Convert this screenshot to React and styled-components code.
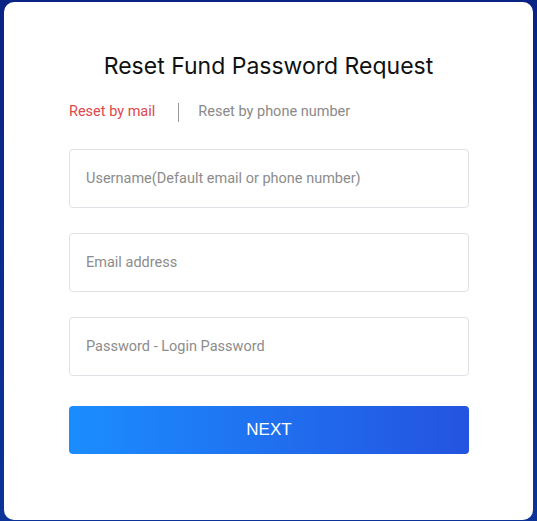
import React from "react";
import styled, { createGlobalStyle } from "styled-components";

const Global = createGlobalStyle`
  html, body { margin: 0; padding: 0; }
  body {
    background: linear-gradient(180deg, #0a2385 0%, #0b3398 100%);
    font-family: Roboto, "Noto Sans", Arial, sans-serif;
    min-height: 521px;
  }
`;

const Page = styled.div`
  padding: 2px 4px 1px 4px;
  box-sizing: border-box;
  height: 521px;
`;

const Card = styled.div`
  background: #fff;
  border-radius: 10px;
  height: 518px;
  box-sizing: border-box;
  padding: 48px 68px 0 65px;
  display: flex;
  flex-direction: column;
`;

const Title = styled.h1`
  margin: 0;
  font-family: Inter, "Noto Sans", sans-serif;
  font-weight: 400;
  font-size: 23px;
  line-height: 32px;
  color: #111;
  text-align: center;
  padding-left: 3px;
`;

const Tabs = styled.div`
  display: flex;
  align-items: center;
  margin-top: 20px;
  height: 20px;
`;

const Tab = styled.span`
  font-size: 14.5px;
  line-height: 20px;
  color: ${(p) => (p.$active ? "#e0474c" : "#8a8a8a")};
`;

const Divider = styled.span`
  width: 1px;
  height: 19px;
  background: #9a9a9a;
  margin: 0 19px 0 23px;
`;

const Form = styled.form`
  display: flex;
  flex-direction: column;
  gap: 25px;
  margin-top: 27px;
`;

const Field = styled.input`
  box-sizing: border-box;
  width: 400px;
  height: 59px;
  border: 1px solid #dfe1e6;
  border-radius: 4px;
  padding: 0 16px;
  font-family: Roboto, "Noto Sans", sans-serif;
  font-size: 14.5px;
  color: #333;
  outline: none;
  &::placeholder { color: #8c8c8c; }
`;

const Button = styled.button`
  margin-top: 5px;
  width: 400px;
  height: 48px;
  border: none;
  border-radius: 4px;
  background: linear-gradient(90deg, #1b8dff 0%, #2453e0 100%);
  color: #fff;
  font-family: "Liberation Sans", Arial, sans-serif;
  font-size: 17px;
  cursor: pointer;
`;

export default function App() {
  return (
    <>
      <Global />
      <Page>
        <Card>
          <Title>Reset Fund Password Request</Title>
          <Tabs>
            <Tab $active>Reset by mail</Tab>
            <Divider />
            <Tab>Reset by phone number</Tab>
          </Tabs>
          <Form onSubmit={(e) => e.preventDefault()}>
            <Field placeholder="Username(Default email or phone number)" />
            <Field placeholder="Email address" />
            <Field placeholder="Password - Login Password" />
            <Button type="submit">NEXT</Button>
          </Form>
        </Card>
      </Page>
    </>
  );
}
